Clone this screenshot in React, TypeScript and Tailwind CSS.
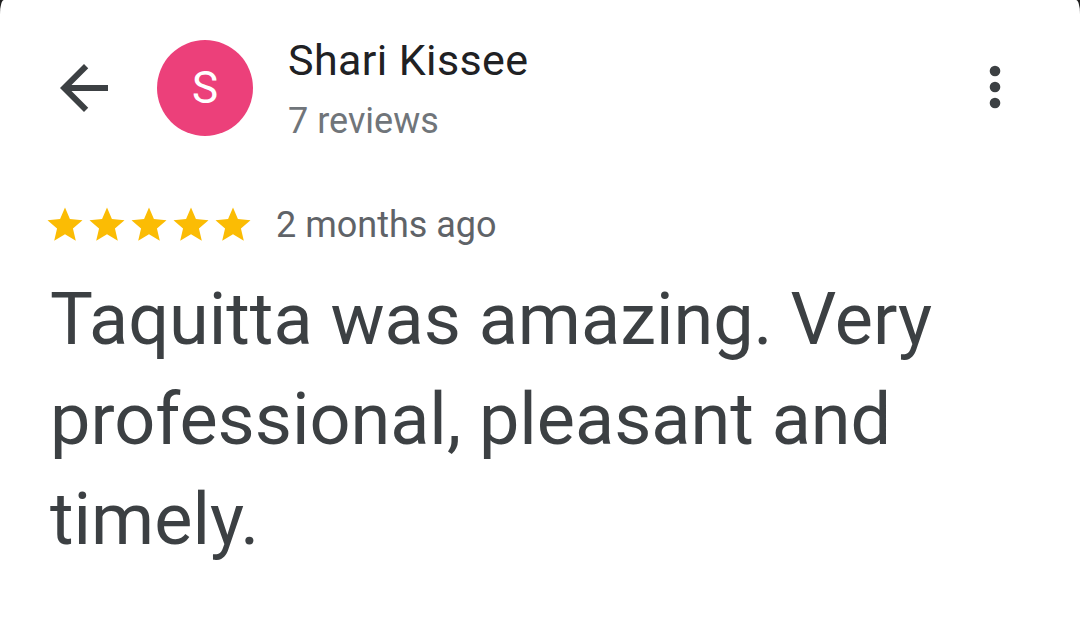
import { ArrowLeft } from "lucide-react"

function Star() {
  return (
    <svg viewBox="0 0 24 24" className="h-[42px] w-[42px] fill-[#fbbc04]">
      <path d="M12 17.27L18.18 21l-1.64-7.03L22 9.24l-7.19-.61L12 2 9.19 8.63 2 9.24l5.46 4.73L5.82 21z" />
    </svg>
  )
}

export default function App() {
  return (
    <div className="h-[618px] w-[1080px] overflow-hidden bg-[#1f1f1f] font-['Roboto',sans-serif]">
      <div className="h-full w-full rounded-tl-[4px_14px] rounded-tr-[4px_14px] bg-white">
        {/* header */}
        <div className="flex items-start pt-[36px]">
          <svg viewBox="0 0 24 24" className="ml-[48px] mt-[16px] h-[72px] w-[72px] fill-[#3c4043]">
            <path d="M20 11H7.83l5.59-5.59L12 4l-8 8 8 8 1.41-1.41L7.83 13H20v-2z" />
          </svg>
          <div className="ml-[37px] mt-[4px] flex h-[96px] w-[96px] items-center justify-center rounded-full bg-[#ec407a] text-[44px] text-white">
            S
          </div>
          <div className="ml-[35px] flex flex-col">
            <div className="text-[43px] leading-[48px] tracking-[0.4px] text-[#202124]">Shari Kissee</div>
            <div className="mt-[16px] text-[36px] leading-[42px] text-[#70757a]">7 reviews</div>
          </div>
          <svg viewBox="0 0 24 24" className="ml-auto mr-[53px] mt-[19px] h-[64px] w-[64px] fill-[#3c4043]">
            <circle cx="12" cy="6" r="2" />
            <circle cx="12" cy="12" r="2" />
            <circle cx="12" cy="18" r="2" />
          </svg>
        </div>

        {/* rating */}
        <div className="ml-[44px] mt-[62px] flex items-center">
          <div className="flex">
            <Star />
            <Star />
            <Star />
            <Star />
            <Star />
          </div>
          <span className="ml-[22px] text-[36px] leading-[42px] text-[#5f6368]">2 months ago</span>
        </div>

        {/* review */}
        <p className="ml-[50px] mt-[24px] text-[72px] leading-[100px] text-[#3c4043]">
          Taquitta was amazing. Very
          <br />
          professional, pleasant and
          <br />
          timely.
        </p>
      </div>
    </div>
  )
}
